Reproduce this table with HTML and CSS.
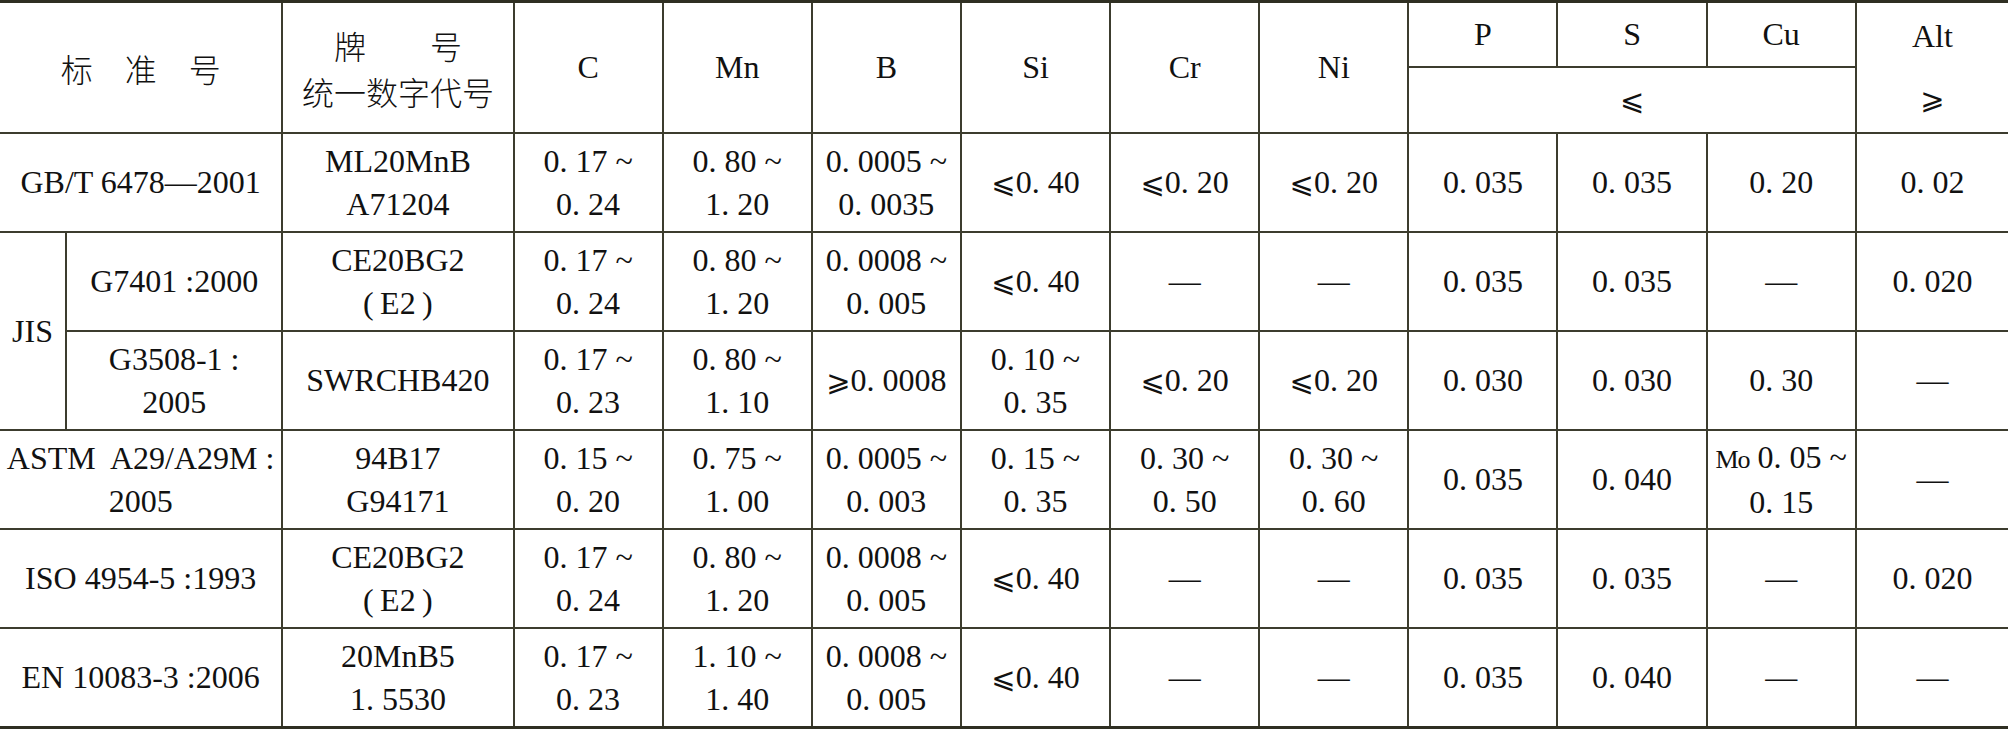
FILE: index.html
```html
<!DOCTYPE html>
<html lang="en">
<head>
    <meta charset="UTF-8">
    <title>硼钢化学成分对照</title>
    <link rel="stylesheet" href="styles.css">
</head>
<body>
    <table class="spec-table">
        <colgroup>
            <col class="w-sub">
            <col class="w-std">
            <col class="w-grade">
            <col class="w-el"><col class="w-el"><col class="w-el"><col class="w-el">
            <col class="w-el"><col class="w-el"><col class="w-el"><col class="w-el">
            <col class="w-el"><col class="w-last">
        </colgroup>
        <thead>
            <tr class="head-top">
                <th colspan="2" rowspan="2" class="cjk" lang="zh">标　准　号</th>
                <th rowspan="2" class="cjk" lang="zh">牌　　号<br>统一数字代号</th>
                <th rowspan="2">C</th>
                <th rowspan="2">Mn</th>
                <th rowspan="2">B</th>
                <th rowspan="2">Si</th>
                <th rowspan="2">Cr</th>
                <th rowspan="2">Ni</th>
                <th>P</th>
                <th>S</th>
                <th>Cu</th>
                <th rowspan="2" class="alt">Alt<br><span class="rel">⩾</span></th>
            </tr>
            <tr class="head-bottom">
                <th colspan="3"><span class="rel">⩽</span></th>
            </tr>
        </thead>
        <tbody>
            <tr>
                <td colspan="2">GB/T 6478—2001</td>
                <td>ML20MnB<br>A71204</td>
                <td>0. 17 ~<br>0. 24</td>
                <td>0. 80 ~<br>1. 20</td>
                <td>0. 0005 ~<br>0. 0035</td>
                <td><span class="rel">⩽</span>0. 40</td>
                <td><span class="rel">⩽</span>0. 20</td>
                <td><span class="rel">⩽</span>0. 20</td>
                <td>0. 035</td>
                <td>0. 035</td>
                <td>0. 20</td>
                <td>0. 02</td>
            </tr>
            <tr>
                <td rowspan="2">JIS</td>
                <td>G7401 :2000</td>
                <td>CE20BG2<br>(&thinsp;E2&thinsp;)</td>
                <td>0. 17 ~<br>0. 24</td>
                <td>0. 80 ~<br>1. 20</td>
                <td>0. 0008 ~<br>0. 005</td>
                <td><span class="rel">⩽</span>0. 40</td>
                <td>—</td>
                <td>—</td>
                <td>0. 035</td>
                <td>0. 035</td>
                <td>—</td>
                <td>0. 020</td>
            </tr>
            <tr>
                <td>G3508-1 :<br>2005</td>
                <td>SWRCHB420</td>
                <td>0. 17 ~<br>0. 23</td>
                <td>0. 80 ~<br>1. 10</td>
                <td><span class="rel">⩾</span>0. 0008</td>
                <td>0. 10 ~<br>0. 35</td>
                <td><span class="rel">⩽</span>0. 20</td>
                <td><span class="rel">⩽</span>0. 20</td>
                <td>0. 030</td>
                <td>0. 030</td>
                <td>0. 30</td>
                <td>—</td>
            </tr>
            <tr>
                <td colspan="2">ASTM&nbsp; A29/A29M :<br>2005</td>
                <td>94B17<br>G94171</td>
                <td>0. 15 ~<br>0. 20</td>
                <td>0. 75 ~<br>1. 00</td>
                <td>0. 0005 ~<br>0. 003</td>
                <td>0. 15 ~<br>0. 35</td>
                <td>0. 30 ~<br>0. 50</td>
                <td>0. 30 ~<br>0. 60</td>
                <td>0. 035</td>
                <td>0. 040</td>
                <td><span class="mo">Mo</span> 0. 05 ~<br>0. 15</td>
                <td>—</td>
            </tr>
            <tr>
                <td colspan="2">ISO 4954-5 :1993</td>
                <td>CE20BG2<br>(&thinsp;E2&thinsp;)</td>
                <td>0. 17 ~<br>0. 24</td>
                <td>0. 80 ~<br>1. 20</td>
                <td>0. 0008 ~<br>0. 005</td>
                <td><span class="rel">⩽</span>0. 40</td>
                <td>—</td>
                <td>—</td>
                <td>0. 035</td>
                <td>0. 035</td>
                <td>—</td>
                <td>0. 020</td>
            </tr>
            <tr>
                <td colspan="2">EN 10083-3 :2006</td>
                <td>20MnB5<br>1. 5530</td>
                <td>0. 17 ~<br>0. 23</td>
                <td>1. 10 ~<br>1. 40</td>
                <td>0. 0008 ~<br>0. 005</td>
                <td><span class="rel">⩽</span>0. 40</td>
                <td>—</td>
                <td>—</td>
                <td>0. 035</td>
                <td>0. 040</td>
                <td>—</td>
                <td>—</td>
            </tr>
        </tbody>
    </table>
</body>
</html>
```

FILE: styles.css
```css
body {
    margin: 0;
    background-color: #ffffff;
    color: #111111;
}

.spec-table {
    width: 2008px;
    table-layout: fixed;
    border-collapse: collapse;
    border-top: 3px solid #2f2f22;
    border-bottom: 3px solid #2f2f22;
    font-family: "Liberation Serif", "Times New Roman", serif;
}

.w-sub { width: 66px; }
.w-std { width: 216px; }
.w-grade { width: 231px; }
.w-el { width: 149px; }
.w-last { width: 152px; }

.spec-table th,
.spec-table td {
    border: 2px solid #3c3c2e;
    padding: 0;
    text-align: center;
    vertical-align: middle;
    font-family: "Liberation Serif", "Times New Roman", serif;
    font-size: 32px;
    font-weight: normal;
    line-height: 43px;
    white-space: nowrap;
}

.spec-table tr > :first-child { border-left: none; }
.spec-table tr > :last-child { border-right: none; }

.spec-table th.alt {
    border-right: none;
    line-height: 62px;
}

.head-top th { height: 63px; }
.head-bottom th { height: 64px; }

.spec-table tbody td { height: 97px; }

.spec-table .cjk {
    font-family: "Noto Sans CJK SC", sans-serif;
    font-size: 32px;
    font-weight: 300;
    line-height: 46px;
}

.rel {
    font-family: "DejaVu Sans", sans-serif;
    font-size: 29px;
}

.mo {
    font-size: 26px;
    letter-spacing: -1px;
}
```
